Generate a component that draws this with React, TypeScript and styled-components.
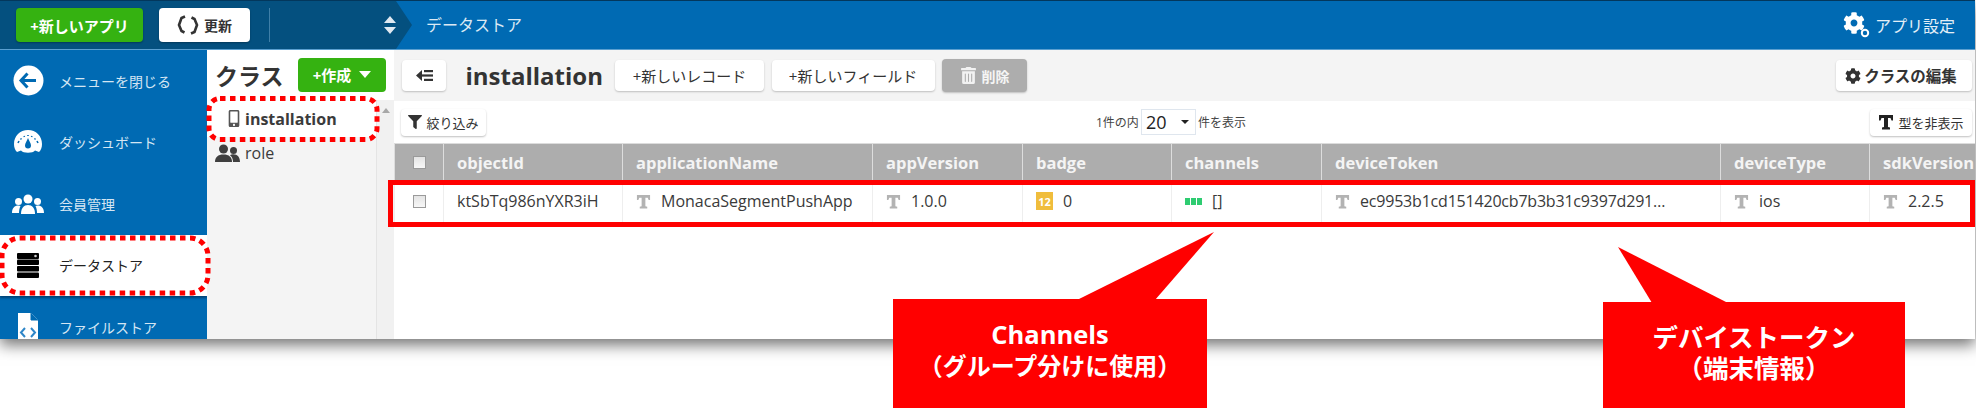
import React from 'react';
import styled, { createGlobalStyle } from 'styled-components';
import { FaCog, FaFilter, FaTrashAlt, FaMobileAlt } from 'react-icons/fa';

const FONT = '"Open Sans", "Noto Sans CJK JP", sans-serif';

const GlobalStyle = createGlobalStyle`
	html, body {
		margin: 0;
		padding: 0;
		background: #ffffff;
	}
	body {
		font-family: ${FONT};
		color: #333333;
	}
`;

const Page = styled.div`
	position: relative;
	width: 1976px;
	height: 408px;
	overflow: hidden;
`;

const Window = styled.div`
	width: 1975px;
	height: 339px;
	display: flex;
	flex-direction: column;
	overflow: hidden;
	background: #ffffff;
	box-shadow: 0 6px 14px rgba(0, 0, 0, 0.55);
`;

// Top bar
const TopBar = styled.header`
	flex: none;
	height: 50px;
	box-sizing: border-box;
	display: flex;
	align-items: stretch;
	background: #006ab3;
	border-top: 1px solid #03375c;
	border-bottom: 1px solid #5a9fd0;
`;

const TopLeft = styled.div`
	width: 396px;
	box-sizing: border-box;
	display: flex;
	align-items: center;
	gap: 16px;
	padding-left: 16px;
	background: #04507f;
`;

const TopArrow = styled.div`
	width: 16px;
	background: #04507f;
	clip-path: polygon(0 0, 100% 50%, 0 100%);
`;

const TopTitle = styled.div`
	margin-left: 14px;
	font-size: 16px;
	line-height: 48px;
	color: #dbe9f4;
`;

const TopSettings = styled.div`
	margin-left: auto;
	padding-right: 20px;
	display: flex;
	align-items: center;
	gap: 5px;
	font-size: 16px;
	color: #e4eff7;
`;

const NewAppButton = styled.button`
	width: 127px;
	height: 34px;
	padding: 0;
	border: none;
	border-radius: 4px;
	background: #35b211;
	color: #ffffff;
	font: bold 15px ${FONT};
	box-shadow: 0 1px 2px rgba(0, 0, 0, 0.3);
`;

const RefreshButton = styled.button`
	width: 91px;
	height: 34px;
	padding: 0;
	border: none;
	border-radius: 4px;
	background: #ffffff;
	color: #333333;
	font: bold 14px ${FONT};
	display: flex;
	align-items: center;
	justify-content: center;
	gap: 5px;
	box-shadow: 0 1px 2px rgba(0, 0, 0, 0.3);
`;

const TopDivider = styled.div`
	width: 1px;
	height: 34px;
	margin-left: 3px;
	background: #3f7fa8;
`;

const UpDown = styled.svg`
	margin-left: auto;
	margin-right: 0;
`;

// Body
const Body = styled.div`
	flex: 1;
	min-height: 0;
	display: flex;
`;

const Sidebar = styled.nav`
	flex: none;
	width: 207px;
	background: #006ab3;
	overflow: hidden;
`;

const NavItem = styled.div<{ $active?: boolean }>`
	height: 61.5px;
	display: flex;
	align-items: center;
	font-size: 14px;
	color: ${({ $active }) => ($active ? '#222222' : '#d5e6f3')};
	background: ${({ $active }) => ($active ? '#ffffff' : 'transparent')};
	box-shadow: ${({ $active }) => ($active ? '0 2px 2px rgba(0, 30, 60, 0.5)' : 'none')};
`;

const NavIcon = styled.span`
	width: 59px;
	flex: none;
	display: flex;
	justify-content: center;
	padding-right: 3px;
	box-sizing: border-box;
`;

const ClassPanel = styled.aside`
	flex: none;
	width: 187px;
	display: flex;
	flex-direction: column;
	background: #f4f4f4;
`;

const ClassHeader = styled.div`
	flex: none;
	height: 50px;
	box-sizing: border-box;
	display: flex;
	align-items: center;
	justify-content: space-between;
	padding: 0 8px 0 8px;
	background: #ffffff;
`;

const ClassTitle = styled.h2`
	margin: 0;
	font-size: 23px;
	font-weight: bold;
	color: #333333;
`;

const CreateButton = styled.button`
	width: 88px;
	height: 34px;
	margin-bottom: 1px;
	padding: 0;
	border: none;
	border-radius: 4px;
	background: #35b211;
	color: #ffffff;
	font: bold 15px ${FONT};
	display: flex;
	align-items: center;
	justify-content: center;
	gap: 8px;
`;

const Caret = styled.span`
	width: 0;
	height: 0;
	border-left: 6px solid transparent;
	border-right: 6px solid transparent;
	border-top: 7px solid #ffffff;
`;

const ClassBody = styled.div`
	flex: 1;
	display: flex;
`;

const ClassList = styled.div`
	flex: 1;
`;

const ClassRow = styled.div<{ $active?: boolean }>`
	height: ${({ $active }) => ($active ? 37 : 32)}px;
	display: flex;
	align-items: center;
	gap: 5px;
	padding-left: 8px;
	font-size: 16px;
	font-weight: ${({ $active }) => ($active ? 'bold' : 'normal')};
	color: #3b3b3b;
	background: ${({ $active }) => ($active ? '#ffffff' : 'transparent')};
`;

const ClassIcon = styled.span`
	width: 25px;
	box-sizing: border-box;
	padding-left: 13px;
	display: flex;
	justify-content: center;
`;

const ScrollTrack = styled.div`
	flex: none;
	width: 18px;
	box-sizing: border-box;
	padding: 8px 0 0 5px;
	background: #f1f1f1;
	border-left: 1px solid #e4e4e4;
`;

const ScrollArrow = styled.div`
	width: 0;
	height: 0;
	border-left: 4px solid transparent;
	border-right: 4px solid transparent;
	border-bottom: 5px solid #a8a8a8;
`;

// Main column
const Main = styled.main`
	flex: 1;
	min-width: 0;
	display: flex;
	flex-direction: column;
`;

const Toolbar = styled.div`
	flex: none;
	height: 51px;
	box-sizing: border-box;
	display: flex;
	align-items: center;
	gap: 7.5px;
	padding: 0 3px 0 8px;
	background: #f4f4f4;
`;

const ToolButton = styled.button<{ $width: number }>`
	flex: none;
	width: ${({ $width }) => $width}px;
	height: 31px;
	padding: 0;
	border: none;
	border-radius: 4px;
	background: #ffffff;
	color: #333333;
	font: 15px ${FONT};
	display: flex;
	align-items: center;
	justify-content: center;
	gap: 5px;
	box-shadow: 0 1px 2px rgba(0, 0, 0, 0.22);
`;

const DeleteButton = styled(ToolButton)`
	height: 33px;
	background: #adadad;
	color: #f5f5f5;
	font-weight: bold;
	font-size: 14px;
`;

const EditButton = styled(ToolButton)`
	margin-left: auto;
	padding-right: 6px;
	font-weight: 600;
	font-size: 15.5px;
	gap: 3px;
`;

const TableTitle = styled.h1`
	flex: none;
	width: 142px;
	margin: 0 0 0 12px;
	font-size: 24px;
	font-weight: bold;
	color: #333333;
`;

const FilterRow = styled.div`
	flex: none;
	height: 42px;
	box-sizing: border-box;
	display: flex;
	align-items: center;
	padding: 0 3px 0 7px;
`;

const SmallButton = styled.button<{ $width: number }>`
	flex: none;
	width: ${({ $width }) => $width}px;
	height: 27px;
	padding: 0;
	border: none;
	border-radius: 4px;
	background: #ffffff;
	color: #333333;
	font: 13px ${FONT};
	display: flex;
	align-items: center;
	justify-content: center;
	gap: 4px;
	box-shadow: 0 1px 2px rgba(0, 0, 0, 0.25);
`;

const TypeButton = styled(SmallButton)`
	margin-left: auto;
`;

const Pager = styled.div`
	margin-left: 610px;
	display: flex;
	align-items: center;
	font-size: 12px;
	color: #444444;
`;

const PageSelect = styled.div`
	width: 55px;
	height: 26px;
	margin: 0 2px;
	box-sizing: border-box;
	display: flex;
	align-items: center;
	justify-content: space-between;
	padding: 0 6px 0 4px;
	border: 1px solid #dfe6ee;
	font-size: 18px;
	color: #222222;
`;

const SelectCaret = styled.span`
	width: 0;
	height: 0;
	border-left: 4px solid transparent;
	border-right: 4px solid transparent;
	border-top: 4px solid #222222;
`;

const Table = styled.table`
	width: 1581px;
	table-layout: fixed;
	border-collapse: collapse;
`;

const HeadCell = styled.th`
	height: 37px;
	box-sizing: border-box;
	padding: 0 0 0 13px;
	overflow: hidden;
	white-space: nowrap;
	text-align: left;
	font-size: 16.5px;
	font-weight: bold;
	color: #f4f4f4;
	background: #adadad;
	border-top: 1px solid #dcdcdc;
	border-left: 1px solid #dddddd;
`;

const CheckHeadCell = styled(HeadCell)`
	padding: 0;
`;

const Cell = styled.td`
	height: 42px;
	box-sizing: border-box;
	padding: 0 13px;
	overflow: hidden;
	white-space: nowrap;
	font-size: 16px;
	color: #3a3a3a;
	border-left: 1px solid #eeeeee;
	border-bottom: 1px solid #eeeeee;
`;

const CellInner = styled.div`
	display: flex;
	align-items: center;
	gap: 10px;
`;

const TokenText = styled.span`
	letter-spacing: -0.2px;
`;

const CheckBox = styled.span`
	display: block;
	width: 13px;
	height: 13px;
	margin: 0 auto;
	box-sizing: border-box;
	border: 1px solid #9a9a9a;
	background: linear-gradient(#e4e4e4, #f7f7f7);
`;

const NumberBadge = styled.span`
	width: 17px;
	height: 18px;
	flex: none;
	display: flex;
	align-items: center;
	justify-content: center;
	background: #f0bd3c;
	color: #ffffff;
	font-size: 11px;
	font-weight: bold;
`;

const ChannelDots = styled.span`
	flex: none;
	display: flex;
	gap: 1px;
`;

const ChannelDot = styled.span`
	width: 5px;
	height: 7px;
	background: #2ecc71;
`;

// Annotations drawn over the screenshot
const DottedOutline = styled.svg`
	position: absolute;
	left: 0;
	top: 0;
	pointer-events: none;
`;

const RedBox = styled.div`
	position: absolute;
	left: 388px;
	top: 180px;
	width: 1587px;
	height: 46.5px;
	box-sizing: border-box;
	border: 5px solid #ff0000;
	border-width: 5px 5px 5px 5.5px;
`;

const Callout = styled.div<{ $left: number; $top: number; $width: number; $size: number }>`
	position: absolute;
	left: ${({ $left }) => $left}px;
	top: ${({ $top }) => $top}px;
	width: ${({ $width }) => $width}px;
	bottom: 0;
	box-sizing: border-box;
	padding-top: 20px;
	background: #ff0000;
	color: #ffffff;
	font-size: ${({ $size }) => $size}px;
	font-weight: bold;
	line-height: 31px;
	text-align: center;
`;

const CalloutLatin = styled.span`
	font-size: 25.5px;
`;

const columns = [
	{ name: 'select', width: 49 },
	{ name: 'objectId', width: 179 },
	{ name: 'applicationName', width: 250 },
	{ name: 'appVersion', width: 150 },
	{ name: 'badge', width: 149 },
	{ name: 'channels', width: 150 },
	{ name: 'deviceToken', width: 399 },
	{ name: 'deviceType', width: 149 },
	{ name: 'sdkVersion', width: 106 },
];

const TypeIcon = ({ color = '#b3b3b3', size = 15 }: { color?: string; size?: number }) => (
	<svg width={size} height={size} viewBox="0 0 16 16" fill={color}>
		<path d="M1 1h14v5.500h-1.500L12.500 4H10v9l2 .6V15.500H4v-1.900l2-.6V4H3.500L2.500 6.500H1z" />
	</svg>
);

const BackCircle = () => (
	<svg width="31" height="31" viewBox="0 0 31 31">
		<circle cx="15.5" cy="15.5" r="15" fill="#ffffff" />
		<path d="M14.5 8.5 8 15.5l6.5 7M8.5 15.5H23" fill="none" stroke="#006ab3" strokeWidth="3" />
	</svg>
);

const GaugeIcon = () => (
	<svg width="30" height="26" viewBox="0 0 30 26">
		<path d="M15 1C7 1 1 7 1 15c0 3.500 1 6 3 8l4 -1.500c2 3 12 3 14 0l4 1.500c2-2 3-4.500 3-8C29 7 23 1 15 1z" fill="#ffffff" />
		<path d="M15 9c-1 3-3 5-3 7.500a3 3 0 0 0 6 0C18 14 16 12 15 9z" fill="#006ab3" />
		<path d="M5 14l1 -2M7.500 9.500l1 .8M11 7l.5 1M15 6v1M19 7l-.5 1M22.500 9.500l-1 .8M25 14l-1 -2" stroke="#006ab3" strokeWidth="1.600" />
	</svg>
);

const PeopleIcon = () => (
	<svg width="32" height="20" viewBox="0 0 32 20" fill="#ffffff">
		<circle cx="16" cy="5" r="4.500" />
		<path d="M9 20c0-6 3-9 7-9s7 3 7 9z" />
		<circle cx="6.500" cy="7.500" r="3.500" />
		<path d="M0 19c0-5 2.500-7.500 6.500-7.500 1 0 1.500 .2 2 .5C7.500 14 7 16.500 7 19z" />
		<circle cx="25.500" cy="7.500" r="3.500" />
		<path d="M32 19c0-5-2.500-7.500-6.500-7.500-1 0-1.500 .2-2 .5 1 2 1.500 4.500 1.500 7z" />
	</svg>
);

const ServerIcon = () => (
	<svg width="22" height="25" viewBox="0 0 22 25" fill="#000000">
		<rect x="0" y="0" width="22" height="6" rx="1" />
		<circle cx="18.500" cy="3" r="1.300" fill="#cfcfcf" />
		<rect x="0" y="6.500" width="22" height="5.500" rx="1" />
		<rect x="0" y="13" width="22" height="5.500" rx="1" />
		<rect x="0" y="19.500" width="22" height="5.500" rx="1" />
	</svg>
);

const FileIcon = () => (
	<svg width="20" height="27" viewBox="0 0 20 27">
		<path d="M0 0h13l7 7v20H0z" fill="#ffffff" />
		<path d="M13 0v7h7" fill="#006ab3" stroke="#006ab3" strokeWidth="1" />
		<path d="M7 15l-4 4.500 4 4.500M13 15l4 4.500-4 4.500" fill="none" stroke="#2f86c8" strokeWidth="2" />
	</svg>
);

const RefreshIcon = () => (
	<svg width="22" height="20" viewBox="0 0 22 20" fill="none" stroke="#333333" strokeWidth="2.600">
		<path d="M8 1.500 4.500 3 2 10l2.500 6 3 1.500" />
		<path d="M14 18.500l3.500-1.500 2.500-7-2.500-6L14.500 2.500" />
	</svg>
);

const CollapseIcon = () => (
	<svg width="17" height="13" viewBox="0 0 17 13" fill="#333333">
		<path d="M0 6.500 6 1v11z" />
		<rect x="8" y="1" width="9" height="2.200" />
		<rect x="6" y="5.400" width="11" height="2.200" />
		<rect x="8" y="9.800" width="9" height="2.200" />
	</svg>
);

const RoleIcon = () => (
	<svg width="25" height="18" viewBox="0 0 25 18" fill="#3f3f3f">
		<circle cx="8.500" cy="5" r="4.500" />
		<path d="M0 18c0-5 3-7.500 8.500-7.500S17 13 17 18z" />
		<circle cx="18.500" cy="6.500" r="3.500" />
		<path d="M18 18c0-3-1-5.500-3-6.800 1-.7 2-1 3.500-1 4 0 6.500 3 6.500 7.800z" />
	</svg>
);

const SettingsGear = () => (
	<svg width="27" height="26" viewBox="0 0 27 26">
		<foreignObject width="22" height="22">
			<FaCog size={22} color="#ffffff" />
		</foreignObject>
		<circle cx="22" cy="21" r="3.200" fill="none" stroke="#ffffff" strokeWidth="2" />
	</svg>
);

const App: React.FC = () => {
	return (
		<Page>
			<GlobalStyle />
			<Window>
				<TopBar>
					<TopLeft>
						<NewAppButton>+新しいアプリ</NewAppButton>
						<RefreshButton>
							<RefreshIcon />
							更新
						</RefreshButton>
						<TopDivider />
						<UpDown width="12" height="18" viewBox="0 0 12 18" fill="#dfe9f1">
							<path d="M6 0l6 7H0zM6 18l6-7H0z" />
						</UpDown>
					</TopLeft>
					<TopArrow />
					<TopTitle>データストア</TopTitle>
					<TopSettings>
						<SettingsGear />
						アプリ設定
					</TopSettings>
				</TopBar>
				<Body>
					<Sidebar>
						<NavItem>
							<NavIcon><BackCircle /></NavIcon>
							メニューを閉じる
						</NavItem>
						<NavItem>
							<NavIcon><GaugeIcon /></NavIcon>
							ダッシュボード
						</NavItem>
						<NavItem>
							<NavIcon><PeopleIcon /></NavIcon>
							会員管理
						</NavItem>
						<NavItem $active>
							<NavIcon><ServerIcon /></NavIcon>
							データストア
						</NavItem>
						<NavItem>
							<NavIcon><FileIcon /></NavIcon>
							ファイルストア
						</NavItem>
					</Sidebar>
					<ClassPanel>
						<ClassHeader>
							<ClassTitle>クラス</ClassTitle>
							<CreateButton>
								+作成
								<Caret />
							</CreateButton>
						</ClassHeader>
						<ClassBody>
							<ClassList>
								<ClassRow $active>
									<ClassIcon><FaMobileAlt size={17} color="#555555" /></ClassIcon>
									installation
								</ClassRow>
								<ClassRow>
									<RoleIcon />
									role
								</ClassRow>
							</ClassList>
							<ScrollTrack>
								<ScrollArrow />
							</ScrollTrack>
						</ClassBody>
					</ClassPanel>
					<Main>
						<Toolbar>
							<ToolButton $width={44}><CollapseIcon /></ToolButton>
							<TableTitle>installation</TableTitle>
							<ToolButton $width={149}>+新しいレコード</ToolButton>
							<ToolButton $width={163}>+新しいフィールド</ToolButton>
							<DeleteButton $width={85}>
								<FaTrashAlt size={17} color="#f2f2f2" />
								削除
							</DeleteButton>
							<EditButton $width={136}>
								<FaCog size={16} color="#333333" />
								クラスの編集
							</EditButton>
						</Toolbar>
						<FilterRow>
							<SmallButton $width={85}>
								<FaFilter size={14} color="#333333" />
								絞り込み
							</SmallButton>
							<Pager>
								1件の内
								<PageSelect>
									20
									<SelectCaret />
								</PageSelect>
								件を表示
							</Pager>
							<TypeButton $width={102}>
								<TypeIcon color="#222222" size={16} />
								型を非表示
							</TypeButton>
						</FilterRow>
						<Table>
							<colgroup>
								{columns.map((col) => (
									<col key={col.name} style={{ width: col.width }} />
								))}
							</colgroup>
							<thead>
								<tr>
									<CheckHeadCell><CheckBox /></CheckHeadCell>
									{columns.slice(1).map((col) => (
										<HeadCell key={col.name}>{col.name}</HeadCell>
									))}
								</tr>
							</thead>
							<tbody>
								<tr>
									<Cell><CheckBox /></Cell>
									<Cell>ktSbTq986nYXR3iH</Cell>
									<Cell><CellInner><TypeIcon />MonacaSegmentPushApp</CellInner></Cell>
									<Cell><CellInner><TypeIcon />1.0.0</CellInner></Cell>
									<Cell><CellInner><NumberBadge>12</NumberBadge>0</CellInner></Cell>
									<Cell>
										<CellInner>
											<ChannelDots>
												<ChannelDot />
												<ChannelDot />
												<ChannelDot />
											</ChannelDots>
											[]
										</CellInner>
									</Cell>
									<Cell><CellInner><TypeIcon /><TokenText>ec9953b1cd151420cb7b3b31c9397d291…</TokenText></CellInner></Cell>
									<Cell><CellInner><TypeIcon />ios</CellInner></Cell>
									<Cell><CellInner><TypeIcon />2.2.5</CellInner></Cell>
								</tr>
							</tbody>
						</Table>
					</Main>
				</Body>
			</Window>

			<RedBox />
			<DottedOutline width="1976" height="408" fill="none" stroke="#ff0000" strokeWidth="5" strokeDasharray="5.5 4.5">
				<rect x="2" y="238" width="206" height="55" rx="18" />
				<rect x="209" y="98.500" width="168" height="41" rx="11" />
				<path d="M1077 300 1214 232 1155 300z" fill="#ff0000" stroke="none" strokeDasharray="none" />
				<path d="M1652 303 1618 247 1728 303z" fill="#ff0000" stroke="none" strokeDasharray="none" />
			</DottedOutline>
			<Callout $left={893} $top={299} $width={314} $size={24}>
				<CalloutLatin>Channels</CalloutLatin>
				<br />
				（グループ分けに使用）
			</Callout>
			<Callout $left={1603} $top={302} $width={302} $size={25.5}>
				デバイストークン
				<br />
				（端末情報）
			</Callout>
		</Page>
	);
};

export default App;
